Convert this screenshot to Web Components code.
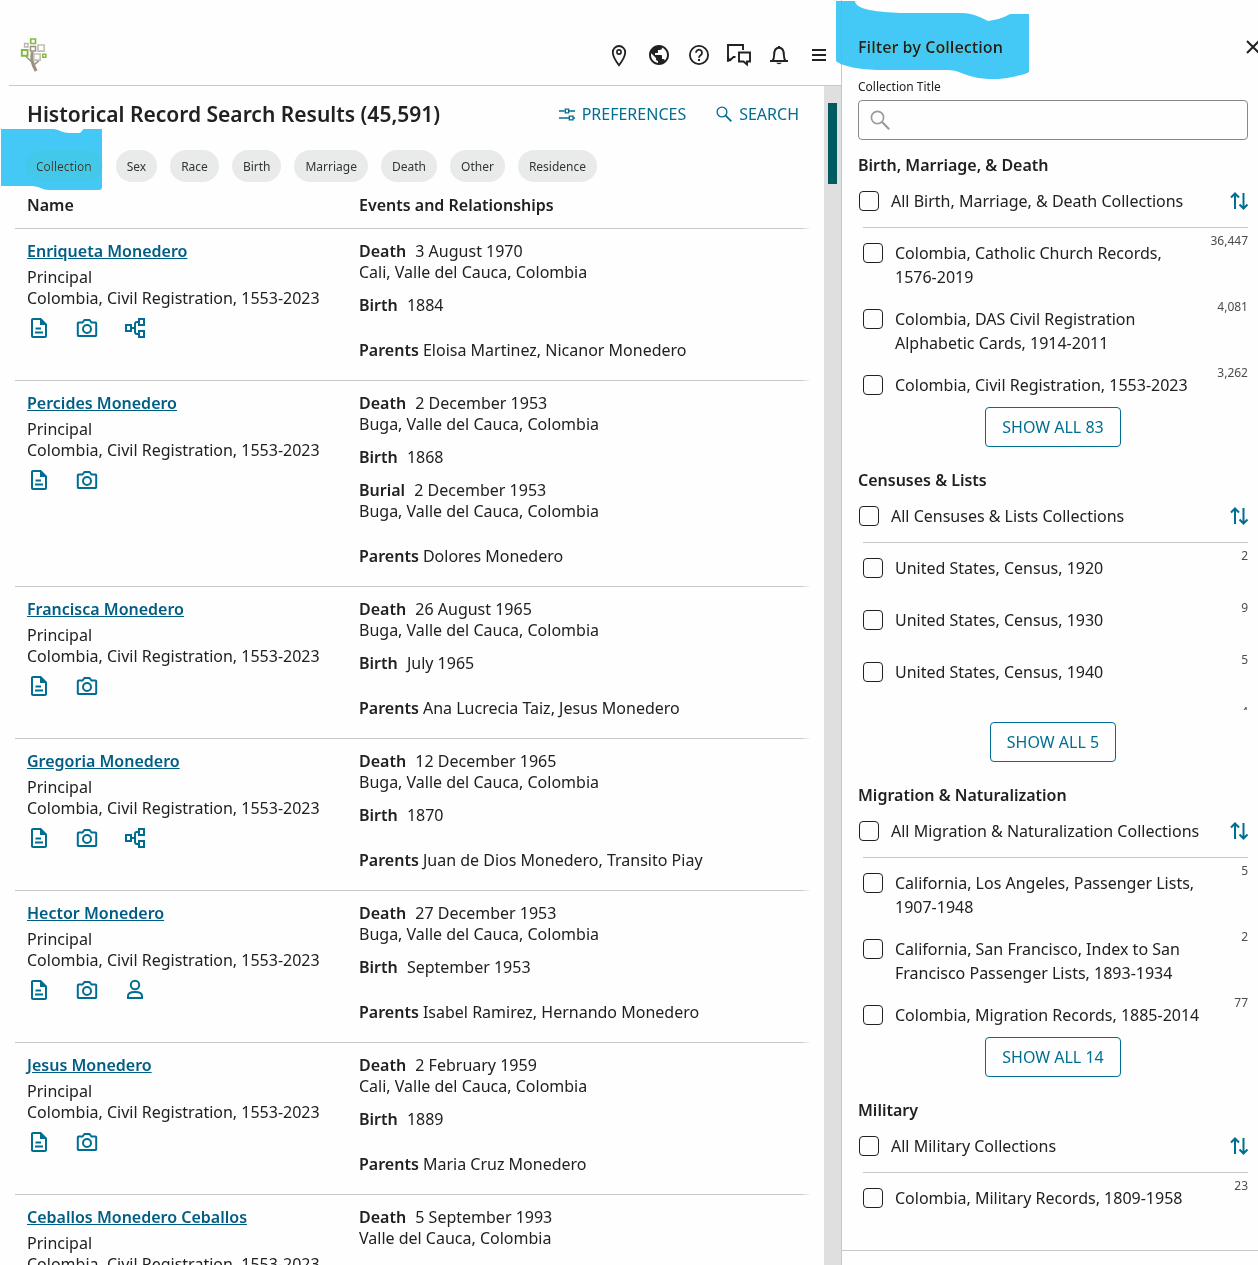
<!DOCTYPE html>
<html lang="en">
<head>
<meta charset="utf-8">
<meta name="viewport" content="width=device-width, initial-scale=1">
<title>Historical Record Search Results</title>
<style>
    :root
    {
        --text: #202121;
        --blue: #006e92;
        --link: #005e85;
        --rule: #c7c8c8;
    }

    body
    {
        margin: 0;
        background: #fefefe;
        color: var(--text);
        font: 16px/21px "Noto Sans", sans-serif;
    }
</style>
</head>
<body>

<search-page>
    <site-header slot="header"></site-header>

    <results-toolbar total="45,591"></results-toolbar>
    <filter-chips>
        <filter-chip>Collection</filter-chip>
        <filter-chip>Sex</filter-chip>
        <filter-chip>Race</filter-chip>
        <filter-chip>Birth</filter-chip>
        <filter-chip>Marriage</filter-chip>
        <filter-chip>Death</filter-chip>
        <filter-chip>Other</filter-chip>
        <filter-chip>Residence</filter-chip>
    </filter-chips>
    <results-table></results-table>

    <filter-panel slot="panel" heading="Filter by Collection">
        <collection-group heading="Birth, Marriage, &amp; Death" total="83">
            <collection-item count="36,447">Colombia, Catholic Church Records, 1576-2019</collection-item>
            <collection-item count="4,081">Colombia, DAS Civil Registration Alphabetic Cards, 1914-2011</collection-item>
            <collection-item count="3,262">Colombia, Civil Registration, 1553-2023</collection-item>
        </collection-group>
        <collection-group heading="Censuses &amp; Lists" total="5">
            <collection-item count="2">United States, Census, 1920</collection-item>
            <collection-item count="9">United States, Census, 1930</collection-item>
            <collection-item count="5">United States, Census, 1940</collection-item>
            <collection-item count="4"></collection-item>
        </collection-group>
        <collection-group heading="Migration &amp; Naturalization" total="14">
            <collection-item count="5">California, Los Angeles, Passenger Lists, 1907-1948</collection-item>
            <collection-item count="2">California, San Francisco, Index to San Francisco Passenger Lists, 1893-1934</collection-item>
            <collection-item count="77">Colombia, Migration Records, 1885-2014</collection-item>
        </collection-group>
        <collection-group heading="Military">
            <collection-item count="23">Colombia, Military Records, 1809-1958</collection-item>
        </collection-group>
    </filter-panel>

    <marker-stroke slot="marks" shape="chip"></marker-stroke>
    <marker-stroke slot="marks" shape="panel"></marker-stroke>
</search-page>

<script>
'use strict';

/**
 * Icon drawings, all on a 24x24 grid.
 */
const ICONS = {
    pin: '<path d="M12 22.200C8 17 5.800 12.700 5.800 9.200a6.200 6.200 0 0 1 12.400 0c0 3.500-2.200 7.800-6.200 13z" fill="none" stroke="currentColor" stroke-width="1.800"/><circle cx="12" cy="9" r="2.100" fill="none" stroke="currentColor" stroke-width="1.600"/>',
    globe: '<path d="M12 2C6.480 2 2 6.480 2 12s4.480 10 10 10 10-4.480 10-10S17.520 2 12 2zm-1 17.930c-3.950-.49-7-3.850-7-7.930 0-.62.080-1.210.210-1.790L9 15v1c0 1.100.9 2 2 2v1.930zm6.900-2.540c-.26-.81-1-1.390-1.900-1.390h-1v-3c0-.55-.45-1-1-1H8v-2h2c.55 0 1-.45 1-1V7h2c1.100 0 2-.9 2-2v-.41c2.930 1.190 5 4.060 5 7.410 0 2.080-.8 3.970-2.100 5.390z" fill="currentColor"/>',
    help: '<circle cx="12" cy="12" r="9.100" fill="none" stroke="currentColor" stroke-width="1.800"/><path d="M9 9.800a3 3 0 1 1 4.700 2.400c-1 .75-1.700 1.200-1.700 2.500" fill="none" stroke="currentColor" stroke-width="1.800"/><path d="M11 16h2v2h-2z" fill="currentColor"/>',
    chat: '<path d="M8.500 14H6.500L3 17.400H1V2h15v5" fill="none" stroke="currentColor" stroke-width="1.900"/><path d="M0 13h2v2.500h2.500L1.500 18.800H0z" fill="currentColor"/><path d="M12 9.500h11v9h-3v3l-3.500-3H12z" fill="none" stroke="currentColor" stroke-width="1.900"/>',
    bell: '<path d="M3 18h18M5.500 17.800c1.300-1.400 1.600-3.200 1.600-5.500 0-4.700 1.700-7.500 4.900-7.500s4.900 2.800 4.900 7.500c0 2.300.3 4.100 1.600 5.500" fill="none" stroke="currentColor" stroke-width="1.900"/><path d="M10.900 3h2.200v2h-2.200zM9.200 19.800h5.600c-.5.900-1.600 1.400-2.800 1.400s-2.300-.5-2.800-1.400z" fill="currentColor"/>',
    menu: '<path d="M5 7h14M5 12h14M5 17h14" stroke="currentColor" stroke-width="2"/>',
    close: '<path d="M6 6l12 12M18 6L6 18" stroke="currentColor" stroke-width="2"/>',
    tune: '<path d="M0 7.500h8.500M15 7.500h9M0 18h15M21 18h3" stroke="currentColor" stroke-width="2"/><path d="M9.500 4.800h5v5.400h-5zM15.500 15.300h5.500v5.400h-5.500z" fill="none" stroke="currentColor" stroke-width="2"/>',
    search: '<circle cx="9" cy="9" r="7.300" fill="none" stroke="currentColor" stroke-width="2"/><path d="M14.200 14.200L23 23" stroke="currentColor" stroke-width="2.600"/>',
    sort: '<path d="M8 20V4.500M4 8.500l4-4 4 4M16.500 4v15.500M12.500 15.500l4 4 4-4" fill="none" stroke="currentColor" stroke-width="2"/>',
    record: '<path d="M14 2H6c-1.100 0-2 .9-2 2v16c0 1.100.9 2 2 2h12c1.100 0 2-.9 2-2V8zM6 20V4h7v5h5v11z" fill="currentColor" fill-rule="evenodd"/><path d="M8.500 12.500H14M8 16.500h8" stroke="currentColor" stroke-width="1.800"/>',
    camera: '<path d="M3.500 6.500h4L9.500 4h5l2 2.500h4c.4 0 .7.300.7.700v12c0 .4-.3.700-.7.700h-17c-.4 0-.7-.3-.7-.7v-12c0-.4.3-.7.700-.7z" fill="none" stroke="currentColor" stroke-width="2"/><circle cx="12" cy="13" r="4" fill="none" stroke="currentColor" stroke-width="2"/>',
    tree: '<path d="M3 9h5v6H3zM16 3h5v6h-5zM16 15h5v6h-5z" fill="none" stroke="currentColor" stroke-width="2"/><path d="M8 12h4M16 6h-2c-1 0-2 .9-2 2v8c0 1.100.9 2 2 2h2" fill="none" stroke="currentColor" stroke-width="2"/>',
    person: '<circle cx="12" cy="7" r="4.200" fill="none" stroke="currentColor" stroke-width="2"/><path d="M5 20v-2c0-2.600 3-4 7-4s7 1.400 7 4v2z" fill="none" stroke="currentColor" stroke-width="2"/>',
};

/**
 * Records listed in the results table.
 * Events are [label, date, place].
 */
const SOURCE = 'Colombia, Civil Registration, 1553-2023';
const BUGA = 'Buga, Valle del Cauca, Colombia';
const CALI = 'Cali, Valle del Cauca, Colombia';
const RECORDS = [
    {
        name: 'Enriqueta Monedero',
        icons: ['record', 'camera', 'tree'],
        events: [['Death', '3 August 1970', CALI], ['Birth', '1884']],
        parents: 'Eloisa Martinez, Nicanor Monedero',
    },
    {
        name: 'Percides Monedero',
        icons: ['record', 'camera'],
        events: [['Death', '2 December 1953', BUGA], ['Birth', '1868'], ['Burial', '2 December 1953', BUGA]],
        parents: 'Dolores Monedero',
    },
    {
        name: 'Francisca Monedero',
        icons: ['record', 'camera'],
        events: [['Death', '26 August 1965', BUGA], ['Birth', 'July 1965']],
        parents: 'Ana Lucrecia Taiz, Jesus Monedero',
    },
    {
        name: 'Gregoria Monedero',
        icons: ['record', 'camera', 'tree'],
        events: [['Death', '12 December 1965', BUGA], ['Birth', '1870']],
        parents: 'Juan de Dios Monedero, Transito Piay',
    },
    {
        name: 'Hector Monedero',
        icons: ['record', 'camera', 'person'],
        events: [['Death', '27 December 1953', BUGA], ['Birth', 'September 1953']],
        parents: 'Isabel Ramirez, Hernando Monedero',
    },
    {
        name: 'Jesus Monedero',
        icons: ['record', 'camera'],
        events: [['Death', '2 February 1959', CALI], ['Birth', '1889']],
        parents: 'Maria Cruz Monedero',
    },
    {
        name: 'Ceballos Monedero Ceballos',
        icons: ['record', 'camera'],
        events: [['Death', '5 September 1993', 'Valle del Cauca, Colombia']],
    },
];

/**
 * Common base: attaches the shadow root and fills it with render().
 */
class BaseElement extends HTMLElement
{
    connectedCallback()
    {
        if( this.shadowRoot )
            return;

        this.attachShadow({mode: 'open'});
        this.shadowRoot.innerHTML = this.render();
    }

    attr(name)
    {
        return (this.getAttribute(name) ?? '').replace(/&/g, '&amp;');
    }
}

/** Icon picked by name; box size comes from --size. */
class UiIcon extends BaseElement
{
    render()
    {
        return `
            <style>
                :host { display: block; flex: none; width: var(--size, 24px); height: var(--size, 24px); }
                svg { display: block; width: 100%; height: 100%; overflow: visible; }
            </style>
            <svg viewBox="0 0 24 24" aria-hidden="true">${ICONS[this.getAttribute('name')]}</svg>
        `;
    }
}

/** Page frame: header and results on the left, filter panel on the right. */
class SearchPage extends BaseElement
{
    render()
    {
        return `
            <style>
                :host
                {
                    display: grid;
                    grid-template-columns: minmax(0, 1fr) 417px;
                    position: relative;
                    height: 100vh;
                    overflow: hidden;
                }
                .left { display: flex; flex-direction: column; min-height: 0; }
                .body { display: flex; flex: 1; min-height: 0; }
                main { flex: 1; min-width: 0; overflow: hidden; padding: 0 13px 0 15px; }
                .track { flex: none; width: 9px; padding: 17px 4px; background: #dfdfdf; }
                .thumb { height: 81px; background: #005a5f; }
            </style>
            <div class="left">
                <slot name="header"></slot>
                <div class="body">
                    <main><slot></slot></main>
                    <div class="track"><div class="thumb"></div></div>
                </div>
            </div>
            <slot name="panel"></slot>
            <slot name="marks"></slot>
        `;
    }
}

class SiteHeader extends BaseElement
{
    render()
    {
        const items = [
            ['pin', 'Places'],
            ['globe', 'Language'],
            ['help', 'Help'],
            ['chat', 'Messages'],
            ['bell', 'Notifications'],
            ['menu', 'Menu'],
        ];

        return `
            <style>
                :host { display: block; }
                header
                {
                    display: flex;
                    align-items: center;
                    justify-content: space-between;
                    height: 60px;
                    margin-left: 9px;
                    padding: 25px 2px 0 10px;
                    border-bottom: 1px solid var(--rule);
                }
                .logo svg { display: block; width: 30px; height: 36px; }
                nav { display: flex; }
                button { width: 40px; height: 40px; padding: 8px; border: 0; background: none; color: inherit; }
            </style>
            <header>
                <a class="logo" href="#" aria-label="Home">
                    <svg viewBox="0 0 30 36" fill="none">
                        <path d="M13.500 15c-.8 3-.9 5.500-.4 8.500.6 3.800 1.700 6.500 4 10.500" stroke="#9a9180" stroke-width="3.200"/>
                        <path d="M7 19c1.500 3 3.500 3.400 5.500 5.400M21 22c-1 2.500-3.500 3-6 6" stroke="#9a9180" stroke-width="1.600"/>
                        <path d="M5.500 6.500h3.500v3.500H5.500z" stroke="#b9b6ae" stroke-width="1.300"/>
                        <path d="M11.500 9.500h5v4.500h-5z" stroke="#9a9180" stroke-width="1.500"/>
                        <path d="M19 8h6.200v6.200H19z" stroke="#c3c0b9" stroke-width="1.700"/>
                        <path d="M14.800 17h6.400v6.200h-6.400z" fill="#fefefe" stroke="#c3c0b9" stroke-width="1.700"/>
                        <path d="M11.700 2h4.800v4.500h-4.800z" stroke="#87b940" stroke-width="1.700"/>
                        <path d="M2.800 13h5.800v5.700H2.800z" stroke="#87b940" stroke-width="1.900"/>
                        <path d="M23.800 17.200h3v3h-3z" stroke="#87b940" stroke-width="1.500"/>
                    </svg>
                </a>
                <nav>
                    ${items.map(([icon, label]) => `<button aria-label="${label}"><ui-icon name="${icon}"></ui-icon></button>`).join('')}
                </nav>
            </header>
        `;
    }
}

class ResultsToolbar extends BaseElement
{
    render()
    {
        return `
            <style>
                :host { display: flex; align-items: center; justify-content: space-between; height: 56px; padding: 0 12px; }
                h1 { margin: 0; font-size: 21px; font-weight: 600; line-height: 28px; }
                .actions { display: flex; gap: 30px; }
                button
                {
                    display: flex;
                    align-items: center;
                    gap: 7px;
                    padding: 0;
                    border: 0;
                    background: none;
                    color: var(--blue);
                    font: inherit;
                    --size: 16px;
                }
            </style>
            <h1>Historical Record Search Results (${this.attr('total')})</h1>
            <div class="actions">
                <button><ui-icon name="tune"></ui-icon>PREFERENCES</button>
                <button><ui-icon name="search"></ui-icon>SEARCH</button>
            </div>
        `;
    }
}

class FilterChips extends BaseElement
{
    render()
    {
        return `
            <style>
                :host { display: flex; flex-wrap: wrap; gap: 13px; padding: 8px 0 0 10px; }
            </style>
            <slot></slot>
        `;
    }
}

class FilterChip extends BaseElement
{
    render()
    {
        return `
            <style>
                :host { display: block; }
                button
                {
                    display: block;
                    height: 32px;
                    padding: 0 11px;
                    border: 0;
                    border-radius: 16px;
                    background: #e9eaea;
                    color: #333434;
                    font: inherit;
                    font-size: 12px;
                }
            </style>
            <button><slot></slot></button>
        `;
    }
}

class ResultsTable extends BaseElement
{
    row(record)
    {
        const events = record.events.map(([label, date, place]) => `
            <p><b>${label}</b> <span class="date">${date}</span>${place ? `<br>${place}` : ''}</p>
        `).join('');
        const parents = record.parents ? `<p class="parents"><b>Parents</b> ${record.parents}</p>` : '';
        const icons = record.icons.map((icon) => `<a href="#" aria-label="${icon}"><ui-icon name="${icon}"></ui-icon></a>`).join('');

        return `
            <tr>
                <td>
                    <a class="name" href="#">${record.name}</a>
                    <div>Principal</div>
                    <div>${SOURCE}</div>
                    <div class="icons">${icons}</div>
                </td>
                <td>${events}${parents}</td>
            </tr>
        `;
    }

    render()
    {
        return `
            <style>
                :host { display: block; }
                table { width: 100%; border-collapse: collapse; table-layout: fixed; }
                col:first-child { width: 332px; }
                th, td { padding: 13px 12px 19px; text-align: left; vertical-align: top; }
                th { padding-bottom: 12px; font-weight: 600; }
                /* row rule, faded out at its right end */
                tbody tr { background: linear-gradient(to right, var(--rule) calc(100% - 10px), transparent) top / 100% 1px no-repeat; }
                b { font-weight: 600; }
                p { margin: 0 0 12px; }
                p:last-child { margin: 0; }
                .date { margin-left: 5px; }
                p.parents { margin-top: 24px; }
                .name { display: block; margin-bottom: 5px; color: var(--link); font-weight: 600; }
                .icons { display: flex; gap: 24px; margin-top: 7px; }
                .icons a { color: var(--blue); }
            </style>
            <table>
                <colgroup><col><col></colgroup>
                <thead>
                    <tr><th scope="col">Name</th><th scope="col">Events and Relationships</th></tr>
                </thead>
                <tbody>${RECORDS.map((record) => this.row(record)).join('')}</tbody>
            </table>
        `;
    }
}

class FilterPanel extends BaseElement
{
    render()
    {
        return `
            <style>
                :host
                {
                    display: flex;
                    flex-direction: column;
                    min-height: 0;
                    overflow: hidden;
                    border-left: 1px solid var(--rule);
                }
                .content { flex: 1; min-height: 0; overflow: hidden; padding: 35px 10px 0 16px; }
                .top { display: flex; align-items: center; justify-content: space-between; height: 24px; }
                h2 { margin: 0; font-size: 16px; font-weight: 600; }
                .close { margin-right: -17px; padding: 0; border: 0; background: none; color: inherit; }
                label { display: block; margin: 18px 0 4px; font-size: 12px; line-height: 19px; }
                .box
                {
                    display: flex;
                    align-items: center;
                    gap: 8px;
                    height: 38px;
                    margin-bottom: 13px;
                    padding: 0 11px;
                    border: 1px solid #878888;
                    border-radius: 4px;
                    --size: 20px;
                }
                .box ui-icon { color: #9a9b9b; }
                input { flex: 1; min-width: 0; border: 0; outline: 0; background: none; font: inherit; }
                footer { flex: none; height: 14px; border-top: 1px solid var(--rule); }
            </style>
            <div class="content">
                <div class="top">
                    <h2>${this.attr('heading')}</h2>
                    <button class="close" aria-label="Close"><ui-icon name="close"></ui-icon></button>
                </div>
                <label for="title">Collection Title</label>
                <div class="box">
                    <ui-icon name="search"></ui-icon>
                    <input id="title" type="text">
                </div>
                <slot></slot>
            </div>
            <footer></footer>
        `;
    }
}

/** Checkbox look shared by the groups and their items. */
const CHECKBOX_STYLE = `
    input
    {
        appearance: none;
        flex: none;
        width: 20px;
        height: 20px;
        margin: 2px 12px 0 0;
        border: 1px solid var(--text);
        border-radius: 4px;
        background: #fefefe;
    }
    label { flex: 1; line-height: 24px; }
`;

class CollectionGroup extends BaseElement
{
    render()
    {
        const heading = this.attr('heading');
        const total = this.attr('total');

        return `
            <style>
                ${CHECKBOX_STYLE}
                :host { display: block; margin-bottom: 21px; }
                h3 { margin: 0; font-size: 16px; font-weight: 600; line-height: 24px; }
                .all { display: flex; padding: 12px 0 14px 1px; }
                .sort { margin-right: -3px; padding: 0; border: 0; background: none; color: var(--blue); }
                .list { max-height: 167px; margin-left: 5px; overflow: hidden; border-top: 1px solid var(--rule); }
                .more
                {
                    display: block;
                    height: 40px;
                    margin: 12px auto 0;
                    padding: 0 16px;
                    border: 1px solid var(--blue);
                    border-radius: 4px;
                    background: none;
                    color: var(--blue);
                    font: inherit;
                }
            </style>
            <h3>${heading}</h3>
            <div class="all">
                <input type="checkbox" id="all">
                <label for="all">All ${heading} Collections</label>
                <button class="sort" aria-label="Sort"><ui-icon name="sort"></ui-icon></button>
            </div>
            <div class="list"><slot></slot></div>
            ${total ? `<button class="more">SHOW ALL ${total}</button>` : ''}
        `;
    }
}

class CollectionItem extends BaseElement
{
    render()
    {
        return `
            <style>
                ${CHECKBOX_STYLE}
                :host { display: flex; box-sizing: border-box; min-height: 52px; }
                .pick { display: flex; flex: 1; align-items: flex-start; padding: 13px 4px 5px 0; }
                .count { flex: none; width: 40px; padding-top: 2px; color: #4b4c4c; font-size: 12px; text-align: right; }
            </style>
            <div class="pick">
                <input type="checkbox" id="pick">
                <label for="pick"><slot></slot></label>
            </div>
            <span class="count">${this.attr('count')}</span>
        `;
    }
}

/**
 * Freehand highlighter stroke laid over the page.
 */
class MarkerStroke extends BaseElement
{
    static SHAPES = {
        chip: {
            left: 1, top: 129, width: 101, height: 62,
            path: 'M0 0h53c6 1 9 4 15 4h10c3 0 3-4 5-4h18v58q0 3-3 3H48c-7 0-10-4-17-4H0z',
        },
        panel: {
            left: 836, top: 1, width: 193, height: 79,
            path: 'M0 0h19c0 9 24 11 45 12h62c10 0 18 4 26 8 8-1 15-3 22-7h19v57c0 3-9 4-17 6-12 3-26 2-34 1-15-3-19-8-31-8H45c-20 0-40-4-45-9z',
        },
    };

    render()
    {
        const s = MarkerStroke.SHAPES[this.getAttribute('shape')];

        return `
            <style>
                :host
                {
                    position: absolute;
                    left: ${s.left}px;
                    top: ${s.top}px;
                    mix-blend-mode: darken;
                    pointer-events: none;
                }
                svg { display: block; }
            </style>
            <svg width="${s.width}" height="${s.height}" aria-hidden="true"><path d="${s.path}" fill="#44c8f6"/></svg>
        `;
    }
}

customElements.define('ui-icon', UiIcon);
customElements.define('search-page', SearchPage);
customElements.define('site-header', SiteHeader);
customElements.define('results-toolbar', ResultsToolbar);
customElements.define('filter-chips', FilterChips);
customElements.define('filter-chip', FilterChip);
customElements.define('results-table', ResultsTable);
customElements.define('filter-panel', FilterPanel);
customElements.define('collection-group', CollectionGroup);
customElements.define('collection-item', CollectionItem);
customElements.define('marker-stroke', MarkerStroke);
</script>
</body>
</html>
